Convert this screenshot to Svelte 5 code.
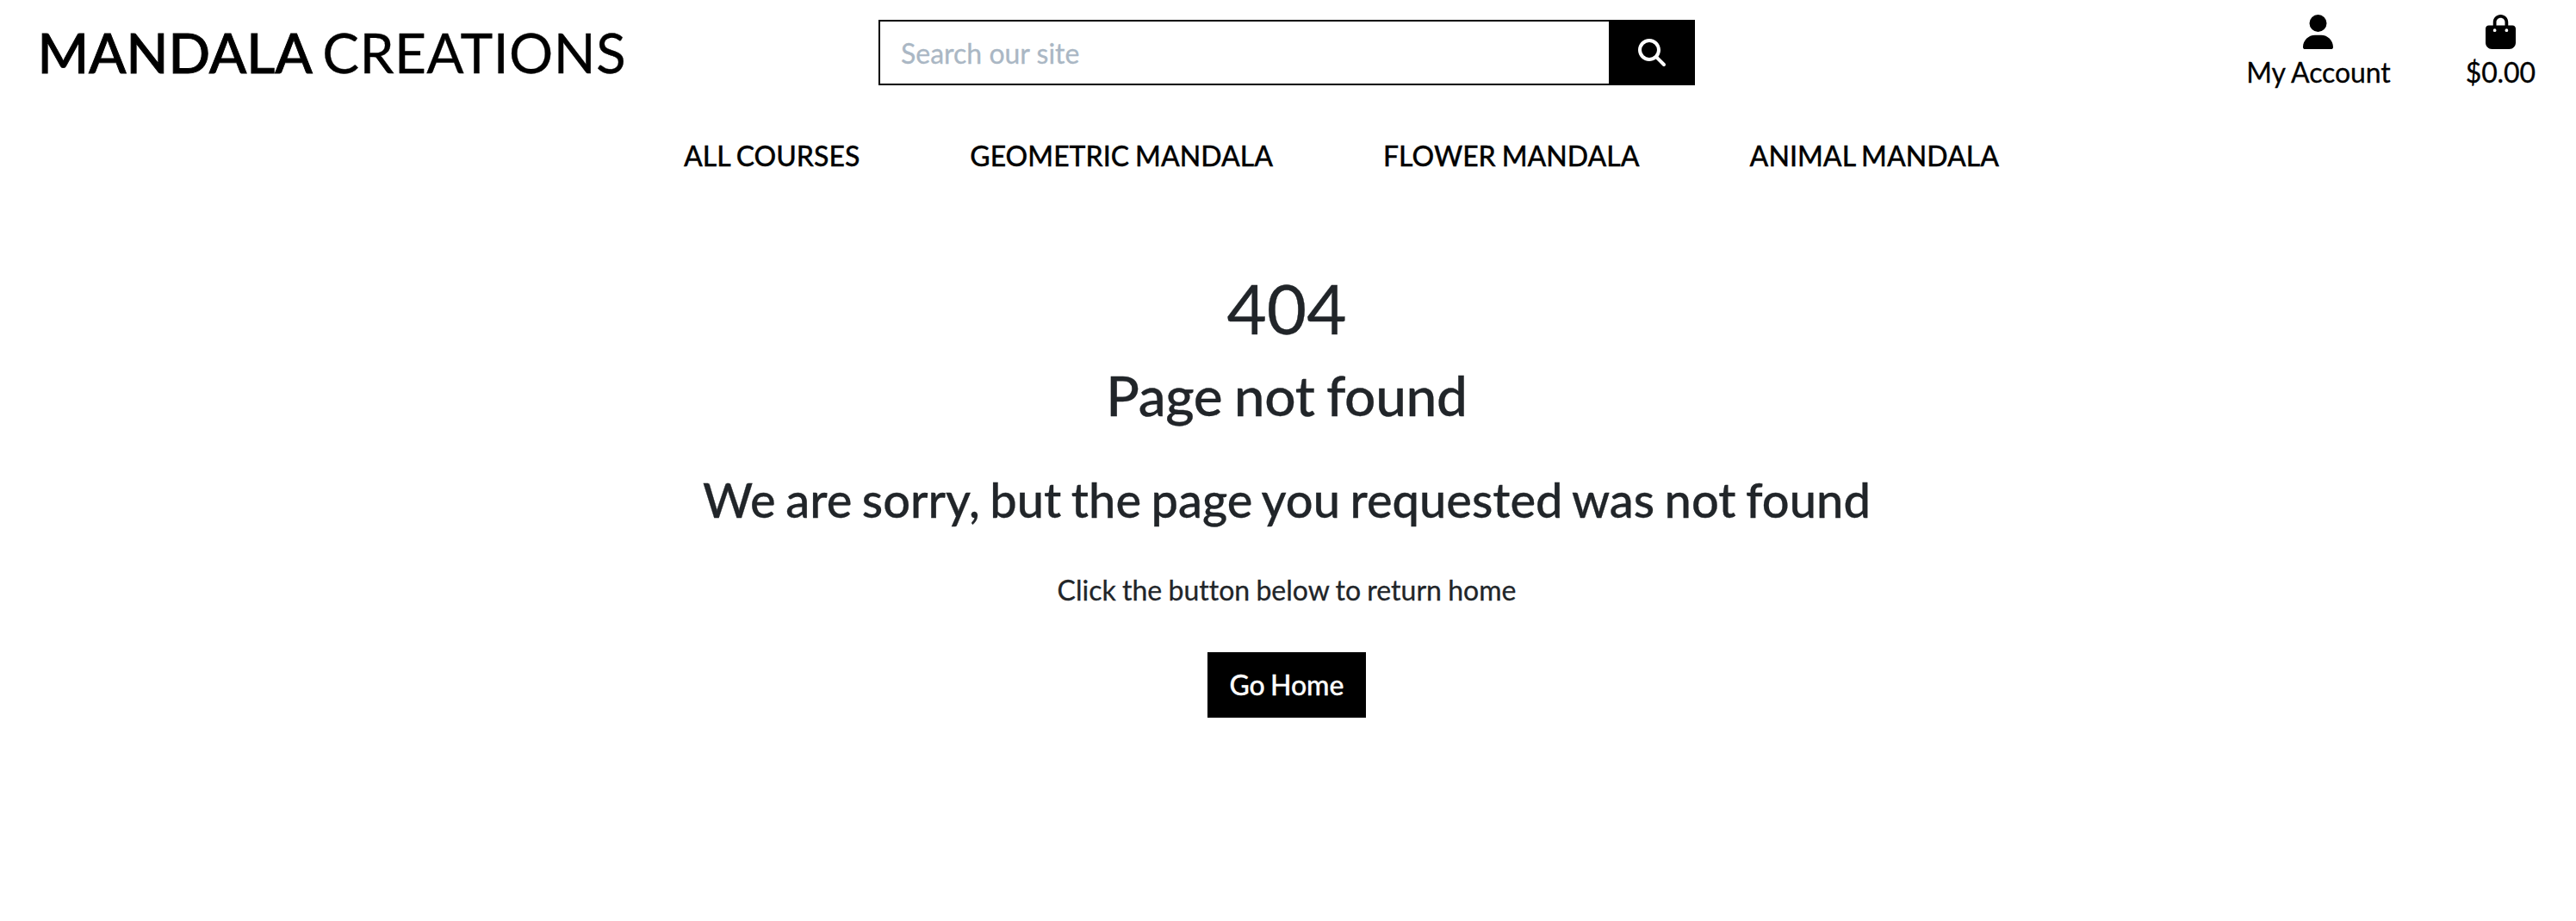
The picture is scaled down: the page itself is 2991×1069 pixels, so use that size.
<script>
  const links = ['ALL COURSES', 'GEOMETRIC MANDALA', 'FLOWER MANDALA', 'ANIMAL MANDALA'];
</script>

<div class="page">
  <header>
    <a class="brand" href="/"><strong>MANDALA</strong> CREATIONS</a>
    <form class="search">
      <input type="text" placeholder="Search our site" />
      <button type="button" aria-label="Search">
        <svg viewBox="0 0 512 512"><path d="M416 208c0 45.900-14.900 88.300-40 122.700L502.600 457.400c12.500 12.500 12.500 32.800 0 45.300s-32.800 12.500-45.300 0L330.700 376c-34.400 25.200-76.800 40-122.700 40C93.100 416 0 322.900 0 208S93.100 0 208 0S416 93.100 416 208zM208 352a144 144 0 1 0 0-288 144 144 0 1 0 0 288z" /></svg>
      </button>
    </form>
    <div class="tools">
      <a href="/account">
        <svg viewBox="0 0 448 512"><path d="M224 256A128 128 0 1 0 224 0a128 128 0 1 0 0 256zm-45.700 48C79.800 304 0 383.800 0 482.300C0 498.700 13.300 512 29.700 512H418.300c16.400 0 29.700-13.300 29.700-29.700C448 383.800 368.200 304 269.700 304H178.300z" /></svg>
        <span>My Account</span>
      </a>
      <a href="/bag">
        <svg viewBox="0 0 448 512"><path d="M160 112c0-35.300 28.700-64 64-64s64 28.700 64 64v48H160V112zm-48 48H48c-26.500 0-48 21.500-48 48V416c0 53 43 96 96 96H352c53 0 96-43 96-96V208c0-26.500-21.500-48-48-48H336V112C336 50.100 285.900 0 224 0S112 50.100 112 112v48zm24 48a24 24 0 1 1 0 48 24 24 0 1 1 0-48zm152 24a24 24 0 1 1 48 0 24 24 0 1 1-48 0z" /></svg>
        <span>$0.00</span>
      </a>
    </div>
  </header>
  <nav>
    {#each links as link}<a href="/courses">{link}</a>{/each}
  </nav>
  <main>
    <h1>404</h1>
    <h2>Page not found</h2>
    <h3>We are sorry, but the page you requested was not found</h3>
    <p>Click the button below to return home</p>
    <a class="home" href="/">Go Home</a>
  </main>
</div>

<style>
  :global(body) { background: #fff; }
  .page { height: 1069px; overflow: hidden; font-family: Lato, sans-serif; font-size: 32px; line-height: 48px; color: #212529; font-variant-ligatures: none; -webkit-text-stroke: 0.3px currentColor; }
  a { color: #000; text-decoration: none; white-space: nowrap; }
  header { height: 122px; display: grid; grid-template-columns: 1020px 948px 1fr; align-items: center; }
  .brand { padding-left: 43.500px; font-size: 64px; line-height: 76px; word-spacing: -5.200px; letter-spacing: 0.400px; }
  .brand strong { font-weight: 500; letter-spacing: -0.100px; -webkit-text-stroke: 0.900px #000; }
  .search { display: flex; height: 76px; }
  input { flex: 1; min-width: 0; box-sizing: border-box; border: 2px solid #000; border-right: 0; border-radius: 0; padding: 1px 24px 0; font: inherit; background: #fff; outline: 0; }
  input::placeholder { color: #aab7c4; opacity: 1; }
  button { width: 100px; padding: 0; border: 0; background: #000; display: flex; align-items: center; justify-content: center; }
  button svg { width: 32px; height: 32px; fill: #fff; }
  svg { stroke: none; }
  .tools { display: flex; justify-content: flex-end; gap: 87px; padding: 3px 47px 0 0; letter-spacing: -0.100px; }
  .tools a { display: flex; flex-direction: column; align-items: center; gap: 3px; }
  .tools svg { width: 35px; height: 40px; }
  nav { display: flex; gap: 128px; height: 117px; align-items: center; padding-left: 794px; font-weight: 500; word-spacing: -1.200px; }
  main { display: flex; flex-direction: column; align-items: center; padding: 70px 3px 0 0; }
  h1, h2, h3, p { margin: 0; font-weight: 500; white-space: nowrap; }
  h1 { font-size: 80px; line-height: 96px; font-weight: 400; }
  h2 { font-size: 64px; line-height: 77px; margin-top: 15px; letter-spacing: -0.350px; word-spacing: -2.400px; }
  h3 { font-size: 56px; line-height: 67px; margin-top: 49px; letter-spacing: 0.010px; word-spacing: -2.700px; }
  p { margin-top: 48px; font-weight: 400; word-spacing: -0.900px; }
  .home { margin-top: 48px; height: 76px; line-height: 76px; padding: 0 25.500px; background: #000; color: #fff; font-weight: 500; word-spacing: -2px; }
</style>
